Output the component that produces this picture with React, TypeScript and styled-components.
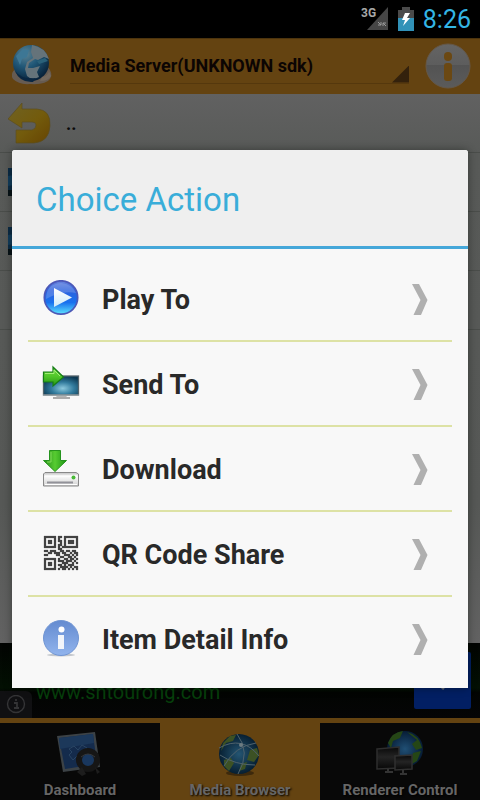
import React from "react";
import styled, { createGlobalStyle } from "styled-components";

const GlobalStyle = createGlobalStyle`
  *, *::before, *::after { box-sizing: border-box; }
  body { margin: 0; background: #000; font-family: Roboto, "Liberation Sans", sans-serif; }
  button, select { font-family: inherit; }
`;

const Screen = styled.div`
  position: relative;
  display: flex;
  flex-direction: column;
  min-height: 100vh;
  overflow: hidden;
  background: #000;
`;

const StatusBar = styled.div`
  display: flex;
  align-items: center;
  justify-content: flex-end;
  gap: 9px;
  height: 38px;
  padding-right: 9px;
  color: #33b5e5;
`;

const Clock = styled.time`
  font-size: 25px;
  line-height: 38px;
  margin-top: 2px;
`;

const Header = styled.header`
  display: flex;
  align-items: center;
  gap: 16px;
  height: 56px;
  padding: 0 9px;
  background: #644311;
  border-top: 1px solid #4d340d;
`;

const SpinnerWrap = styled.label`
  display: grid;
  flex: 1;
  height: 34px;
  border-bottom: 1px solid #55380d;

  > * { grid-area: 1 / 1; }
`;

const Spinner = styled.select`
  appearance: none;
  border: 0;
  padding: 0 20px 2px 0;
  width: 100%;
  background: transparent;
  color: #0c0503;
  font-size: 18px;
  font-weight: 700;
`;

const SpinnerCorner = styled.span`
  place-self: end;
  width: 17px;
  height: 17px;
  background: #33210c;
  clip-path: polygon(100% 0, 100% 100%, 0 100%);
  pointer-events: none;
`;

const IconButton = styled.button`
  display: block;
  padding: 0;
  border: 0;
  background: none;
  line-height: 0;
`;

const FileList = styled.ul`
  flex: 1;
  margin: 0;
  padding: 0;
  list-style: none;
  background: linear-gradient(#616161, #585a58 60px, #565856 75%, #626262);
`;

const FileRow = styled.li`
  display: flex;
  align-items: center;
  gap: 14px;
  height: 59px;
  padding-left: 8px;
  border-bottom: 1px solid #4a4d4a;
  color: #0a0a0a;
  font-size: 18px;
  font-weight: 700;
`;

const AdBanner = styled.aside`
  display: flex;
  align-items: flex-end;
  height: 75px;
  background: linear-gradient(#020402, #031003 60%, #020402 66%, #050506);
`;

const AdBadge = styled.span`
  display: grid;
  place-items: center;
  width: 32px;
  height: 27px;
  background: #101012;
  border-top-right-radius: 6px;
`;

const AdLink = styled.a`
  flex: 1;
  align-self: flex-end;
  padding: 0 0 14px 4px;
  color: #063f0b;
  font-size: 20px;
  line-height: 24px;
  text-decoration: none;
`;

const AdButton = styled.button`
  display: grid;
  place-items: center;
  width: 57px;
  height: 57px;
  margin: 0 9px 9px 0;
  padding: 0;
  border: 0;
  border-radius: 2px;
  background: #021f63;
`;

const TabBar = styled.nav`
  display: grid;
  grid-template-columns: repeat(3, 1fr);
  height: 82px;
  border-top: 5px solid #644311;
`;

const Tab = styled.button<{ $active?: boolean }>`
  display: flex;
  flex-direction: column;
  align-items: center;
  justify-content: space-between;
  padding: 8px 0 2px;
  border: 0;
  background: ${(p) => (p.$active ? "#644311" : "#080808")};
  color: #666;
  font-size: 15px;
  font-weight: 700;
  line-height: 16px;
  white-space: nowrap;
  text-shadow: 1px 1px 2px #000;
`;

const Dialog = styled.section`
  position: absolute;
  top: 150px;
  left: 12px;
  right: 12px;
  padding-bottom: 8px;
  background: #f8f8f8;
  border-radius: 3px 3px 0 0;
  box-shadow: 0 0 8px rgba(0, 10, 0, 0.4);
`;

const DialogTitle = styled.h1`
  margin: 0;
  padding: 4px 24px 0;
  border-bottom: 3px solid #45a7d9;
  border-radius: 3px 3px 0 0;
  background: #efefef;
  color: #39add9;
  font-size: 33px;
  font-weight: 400;
  line-height: 92px;
`;

const ActionList = styled.ul`
  margin: 0;
  padding: 8px 16px 0;
  list-style: none;
`;

const ActionItem = styled.li`
  border-bottom: 2px solid #dde2a5;

  &:last-child { border-bottom: 0; }
`;

const ActionButton = styled.button`
  display: flex;
  align-items: center;
  gap: 22px;
  width: 100%;
  height: 83px;
  padding: 0 24px 0 14px;
  border: 0;
  background: none;
  color: #292929;
  font-size: 27px;
  font-weight: 700;
  text-align: left;
`;

const ActionLabel = styled.span`
  flex: 1;
  padding-top: 2px;
`;

const SignalIcon = () => (
  <svg width="28" height="26" viewBox="0 0 28 26" aria-label="3G signal">
    <path d="M27 1V24H6Z" fill="#464646" />
    <path d="M17 16l3 3m0-3v3h-3M25 20l-3-3m0 3v-3h3" stroke="#999" fill="none" />
    <text x="0" y="11" fontSize="12" fontWeight="700" fill="#a8a8a8">3G</text>
  </svg>
);

const BatteryIcon = () => (
  <svg width="16" height="24" viewBox="0 0 16 24" aria-label="Charging">
    <path d="M0 3H4V0H12V3H16V12H0Z" fill="#4b4b4b" />
    <path d="M0 11H16V24H0Z" fill="#3192b8" />
    <path d="M7 6H12L9 11H12L5 19L7 13H4Z" fill="#fff" />
  </svg>
);

const GlobeIcon = () => (
  <svg width="45" height="50" viewBox="0 0 45 50" aria-hidden="true">
    <defs>
      <radialGradient id="globe" cx=".35" cy=".25" r=".8">
        <stop offset="0" stopColor="#5d8393" />
        <stop offset=".45" stopColor="#205777" />
        <stop offset="1" stopColor="#061e35" />
      </radialGradient>
    </defs>
    <path d="M6 27Q1 32 4 37Q10 43 21 42Q37 43 41 37Q45 32 38 24Z" fill="#665b52" />
    <circle cx="22" cy="21" r="18" fill="url(#globe)" />
    <path d="M23 3Q36 5 40 17L35 15L29 18L26 17L20 21L19 26L24 26L31 24L28 30L30 35Q23 39 18 34L16 27L18 20L24 16L22 10Z" fill="#65737a" />
    <path d="M7 14L14 7L20 8L18 15L13 17L11 23Z" fill="#3d7795" />
    <path d="M28 19L36 16L39 19L30 22Z" fill="#2a6179" />
    <path d="M6 29Q13 38 27 36L24 40Q11 41 6 29Z" fill="#0a2742" />
    <path d="M33 35Q39 34 40 29L42 34Q40 39 31 39Z" fill="#73685d" />
  </svg>
);

const HeaderInfoIcon = () => (
  <svg width="46" height="48" viewBox="0 0 46 48" aria-hidden="true">
    <defs>
      <linearGradient id="disc" x2="0" y2="1">
        <stop offset="0" stopColor="#646464" />
        <stop offset=".47" stopColor="#5d5d5d" />
        <stop offset=".48" stopColor="#535353" />
        <stop offset="1" stopColor="#5b5b5b" />
      </linearGradient>
    </defs>
    <circle cx="23" cy="23" r="22" fill="url(#disc)" stroke="#64584a" />
    <rect x="19" y="9" width="8" height="9" rx="4" fill="#6b4812" />
    <rect x="19" y="20" width="8" height="18" rx="3" fill="#6b4812" />
  </svg>
);

const BackIcon = () => (
  <svg width="44" height="42" viewBox="0 0 44 42" aria-hidden="true">
    <defs>
      <linearGradient id="back" x2="1" y2="1">
        <stop offset="0" stopColor="#6f6224" />
        <stop offset=".55" stopColor="#735b0c" />
        <stop offset="1" stopColor="#664402" />
      </linearGradient>
    </defs>
    <path d="M0 17L14 1V7H29Q43 8 42 24Q41 40 26 41H8V28H24Q28 27 28 23Q28 20 24 20H14V26Z" fill="url(#back)" stroke="#5b4d20" strokeWidth=".7" />
  </svg>
);

const PictureIcon = () => (
  <svg width="36" height="28" viewBox="0 0 36 28" aria-hidden="true">
    <path d="M0 0H36V28H0Z" fill="#0b2b45" />
    <path d="M0 22H36V28H0Z" fill="#071216" />
    <path d="M0 8L36 2V12L0 18Z" fill="#123c5c" />
  </svg>
);

const AdInfoIcon = () => (
  <svg width="20" height="20" viewBox="0 0 20 20" fill="none" stroke="#343436" aria-hidden="true">
    <circle cx="10" cy="9" r="8.5" strokeWidth="1.4" />
    <path d="M8 8H11V13M8 13H13M10 4V6" strokeWidth="1.8" />
  </svg>
);

const AdArrowIcon = () => (
  <svg width="24" height="24" viewBox="0 0 24 24" aria-hidden="true">
    <path d="M9 4L18 12L11 20" stroke="#626a78" strokeWidth="3" fill="none" />
  </svg>
);

const PlayIcon = () => (
  <svg width="38" height="38" viewBox="0 0 38 38" aria-hidden="true">
    <defs>
      <linearGradient id="play" x2="0" y2="1">
        <stop offset="0" stopColor="#6a85dc" />
        <stop offset=".3" stopColor="#2c62de" />
        <stop offset=".65" stopColor="#1971ee" />
        <stop offset="1" stopColor="#5ee5ff" />
      </linearGradient>
      <linearGradient id="triangle" x2="0" y2="1">
        <stop offset="0" stopColor="#fff" />
        <stop offset="1" stopColor="#cfeaf8" />
      </linearGradient>
    </defs>
    <circle cx="19" cy="17.5" r="16.7" fill="url(#play)" stroke="#4c58b7" strokeWidth="1.7" />
    <path d="M4 19Q4 4 19 3Q30 4 34 13Q20 10 4 19Z" fill="#a9c0f1" opacity=".3" />
    <path d="M12 8L30 17.5L12 27Z" fill="url(#triangle)" />
  </svg>
);

const SendIcon = () => (
  <svg width="38" height="38" viewBox="0 0 38 38" aria-hidden="true">
    <defs>
      <radialGradient id="monitor" cx=".55" cy=".65" r=".65">
        <stop offset="0" stopColor="#8dc9dd" />
        <stop offset=".5" stopColor="#327b9d" />
        <stop offset="1" stopColor="#0b3852" />
      </radialGradient>
      <linearGradient id="green" x2="0" y2="1">
        <stop offset="0" stopColor="#70dc3d" />
        <stop offset=".5" stopColor="#50c629" />
        <stop offset="1" stopColor="#249412" />
      </linearGradient>
    </defs>
    <path d="M15 31H24L28 34H11Z" fill="#b5b5b5" />
    <path d="M11 32H28V34H11Z" fill="#aaaaaa" />
    <rect x="1.5" y="11" width="35" height="19" fill="url(#monitor)" stroke="#53636b" strokeWidth="1.3" />
    <path d="M1 30H37" stroke="#a2adb0" />
    <path d="M1.5 7H11V2L21.500 12L11 21V17H1.500Z" fill="url(#green)" stroke="#167c16" strokeWidth="1.200" />
    <path d="M3 8.500H12V5L18 11" fill="none" stroke="#a1ed77" />
  </svg>
);

const DownloadIcon = () => (
  <svg width="38" height="38" viewBox="0 0 38 38" aria-hidden="true">
    <defs>
      <linearGradient id="drive" x2="0" y2="1">
        <stop offset="0" stopColor="#c2c2c2" />
        <stop offset=".3" stopColor="#f9f9f9" />
        <stop offset="1" stopColor="#d0d0d0" />
      </linearGradient>
      <linearGradient id="down" x2="1" y2="0">
        <stop offset="0" stopColor="#238b18" />
        <stop offset=".5" stopColor="#57cc31" />
        <stop offset="1" stopColor="#1c9413" />
      </linearGradient>
    </defs>
    <path d="M3 22.500H34L36.500 24V36H1.500V24Z" fill="url(#drive)" stroke="#888" />
    <path d="M3 26H35M3 34.500H35" stroke="#fff" />
    <path d="M5 32.500H31" stroke="#929299" strokeWidth="2" />
    <circle cx="31.500" cy="27.500" r="2" fill="#48b936" />
    <path d="M7.500 .5H18.500V10.500H24.500L13 21.500L1.500 10.500H7.500Z" fill="url(#down)" stroke="#25931d" />
    <path d="M9 2V12H5" stroke="#83dc5d" fill="none" />
  </svg>
);

const QR_ROWS = [
  "11111101101111111",
  "10000101001000001",
  "10110101101011101",
  "10110100101011101",
  "10000101101000001",
  "11111101011111111",
  "00000001100000000",
  "11011100110110110",
  "00110111011001011",
  "11000011001110101",
  "00000000110011010",
  "11111101001101101",
  "10000101110111010",
  "10110100011100101",
  "10110101101011100",
  "10000100111101011",
  "11111101011010101",
];
const qrPath = QR_ROWS.map((row, y) =>
  Array.from(row).map((bit, x) => (bit === "1" ? `M${x} ${y}h1v1h-1z` : "")).join("")
).join("");

const QrIcon = () => (
  <svg width="38" height="38" viewBox="-1 -.5 19 19" aria-hidden="true">
    <path d={qrPath} fill="#424242" stroke="#424242" strokeWidth=".12" />
  </svg>
);

const InfoIcon = () => (
  <svg width="38" height="38" viewBox="0 0 38 38" aria-hidden="true">
    <defs>
      <linearGradient id="info" x2="0" y2="1">
        <stop offset="0" stopColor="#648bd0" />
        <stop offset="1" stopColor="#91b4ed" />
      </linearGradient>
    </defs>
    <ellipse cx="19" cy="35" rx="14" ry="1.500" fill="#c3c7cc" />
    <circle cx="19" cy="18" r="17.500" fill="url(#info)" stroke="#7095d3" />
    <circle cx="19.500" cy="9.500" r="3" fill="#fff" />
    <path d="M16 15H22V29H16Z" fill="#f2f5fa" />
  </svg>
);

const Chevron = () => (
  <svg width="16" height="34" viewBox="0 0 16 34" aria-hidden="true">
    <path d="M0 2H7L15.500 18L9 33H1.500L8.500 18Z" fill="#b0b0b0" />
  </svg>
);

const DashboardIcon = () => (
  <svg width="48" height="46" viewBox="0 0 48 46" aria-hidden="true">
    <path d="M1 5L39 1L44 36L7 41Z" fill="#3c4246" />
    <path d="M3 7L37 3L41 33L9 38Z" fill="#142b4c" />
    <path d="M3 7L37 3L38 12L4 18Z" fill="#1c385a" />
    <path d="M13 18l5-3 4 4 4-5 5 3-4 4 5 2-5 4-5-3-5 5-4-5 3-3z" stroke="#294462" fill="none" />
    <circle cx="32" cy="29" r="9" fill="#19375e" stroke="#161616" strokeWidth="6" />
    <path d="M21 41L26 36L30 43L26 45ZM39 36L44 41L41 43Z" fill="#1d1d1d" />
    <path d="M25 26Q32 20 39 26" stroke="#34383d" fill="none" />
  </svg>
);

const BrowserIcon = () => (
  <svg width="46" height="46" viewBox="0 0 46 46" aria-hidden="true">
    <defs>
      <radialGradient id="earth">
        <stop offset="0" stopColor="#245572" />
        <stop offset="1" stopColor="#071f32" />
      </radialGradient>
    </defs>
    <ellipse cx="23" cy="42" rx="14" ry="3" fill="#3d290c" />
    <circle cx="22" cy="23" r="20" fill="url(#earth)" />
    <path d="M6 12L13 5L19 4L16 10L9 12L4 20ZM7 29L14 27L17 32L12 40L7 35ZM33 19L40 17L42 24L37 31L30 29ZM24 33L30 31L28 38L22 40Z" fill="#3c5124" />
    <path d="M2 17Q25 4 42 25M7 35Q18 15 39 12M20 3Q34 21 21 43M3 24Q18 34 38 34" stroke="#4f626c" fill="none" />
    <circle cx="24" cy="14" r="2" fill="#6c7b82" />
  </svg>
);

const RendererIcon = () => (
  <svg width="48" height="46" viewBox="0 0 48 46" aria-hidden="true">
    <defs>
      <radialGradient id="network">
        <stop offset="0" stopColor="#204f74" />
        <stop offset="1" stopColor="#061c35" />
      </radialGradient>
      <linearGradient id="screens" x2="0" y2="1">
        <stop offset="0" stopColor="#090909" />
        <stop offset=".45" stopColor="#242424" />
        <stop offset="1" stopColor="#080808" />
      </linearGradient>
    </defs>
    <circle cx="29" cy="18" r="18" fill="url(#network)" />
    <path d="M12 12Q16 1 27 0L24 7L17 10L15 17ZM31 1Q43 4 46 17L40 19L36 13L41 9ZM37 22L45 20L41 30L34 34Z" fill="#254615" />
    <path d="M1 18L23 16V37L1 38Z" fill="url(#screens)" stroke="#2e2e2e" strokeWidth="1.500" />
    <path d="M19 25L36 24V38L19 39Z" fill="url(#screens)" stroke="#303030" strokeWidth="1.500" />
    <path d="M12 38V41M9 41H17M27 39V43M24 43H31" stroke="#343434" strokeWidth="2" />
  </svg>
);

const actions = [
  { label: "Play To", Icon: PlayIcon },
  { label: "Send To", Icon: SendIcon },
  { label: "Download", Icon: DownloadIcon },
  { label: "QR Code Share", Icon: QrIcon },
  { label: "Item Detail Info", Icon: InfoIcon },
];

const tabs = [
  { label: "Dashboard", Icon: DashboardIcon },
  { label: "Media Browser", Icon: BrowserIcon, active: true },
  { label: "Renderer Control", Icon: RendererIcon },
];

export default function App() {
  return (
    <Screen>
      <GlobalStyle />
      <StatusBar>
        <SignalIcon />
        <BatteryIcon />
        <Clock>8:26</Clock>
      </StatusBar>
      <Header>
        <GlobeIcon />
        <SpinnerWrap>
          <Spinner aria-label="Media server">
            <option>Media Server(UNKNOWN sdk)</option>
          </Spinner>
          <SpinnerCorner />
        </SpinnerWrap>
        <IconButton aria-label="Information">
          <HeaderInfoIcon />
        </IconButton>
      </Header>
      <FileList>
        <FileRow>
          <BackIcon />
          <span>..</span>
        </FileRow>
        <FileRow><PictureIcon /></FileRow>
        <FileRow><PictureIcon /></FileRow>
        <FileRow />
      </FileList>
      <AdBanner>
        <AdBadge><AdInfoIcon /></AdBadge>
        <AdLink href="#">www.shtourong.com</AdLink>
        <AdButton aria-label="Open"><AdArrowIcon /></AdButton>
      </AdBanner>
      <TabBar>
        {tabs.map(({ label, Icon, active }) => (
          <Tab key={label} $active={active}>
            <Icon />
            {label}
          </Tab>
        ))}
      </TabBar>
      <Dialog role="dialog" aria-labelledby="dialog-title">
        <DialogTitle id="dialog-title">Choice Action</DialogTitle>
        <ActionList>
          {actions.map(({ label, Icon }) => (
            <ActionItem key={label}>
              <ActionButton>
                <Icon />
                <ActionLabel>{label}</ActionLabel>
                <Chevron />
              </ActionButton>
            </ActionItem>
          ))}
        </ActionList>
      </Dialog>
    </Screen>
  );
}
